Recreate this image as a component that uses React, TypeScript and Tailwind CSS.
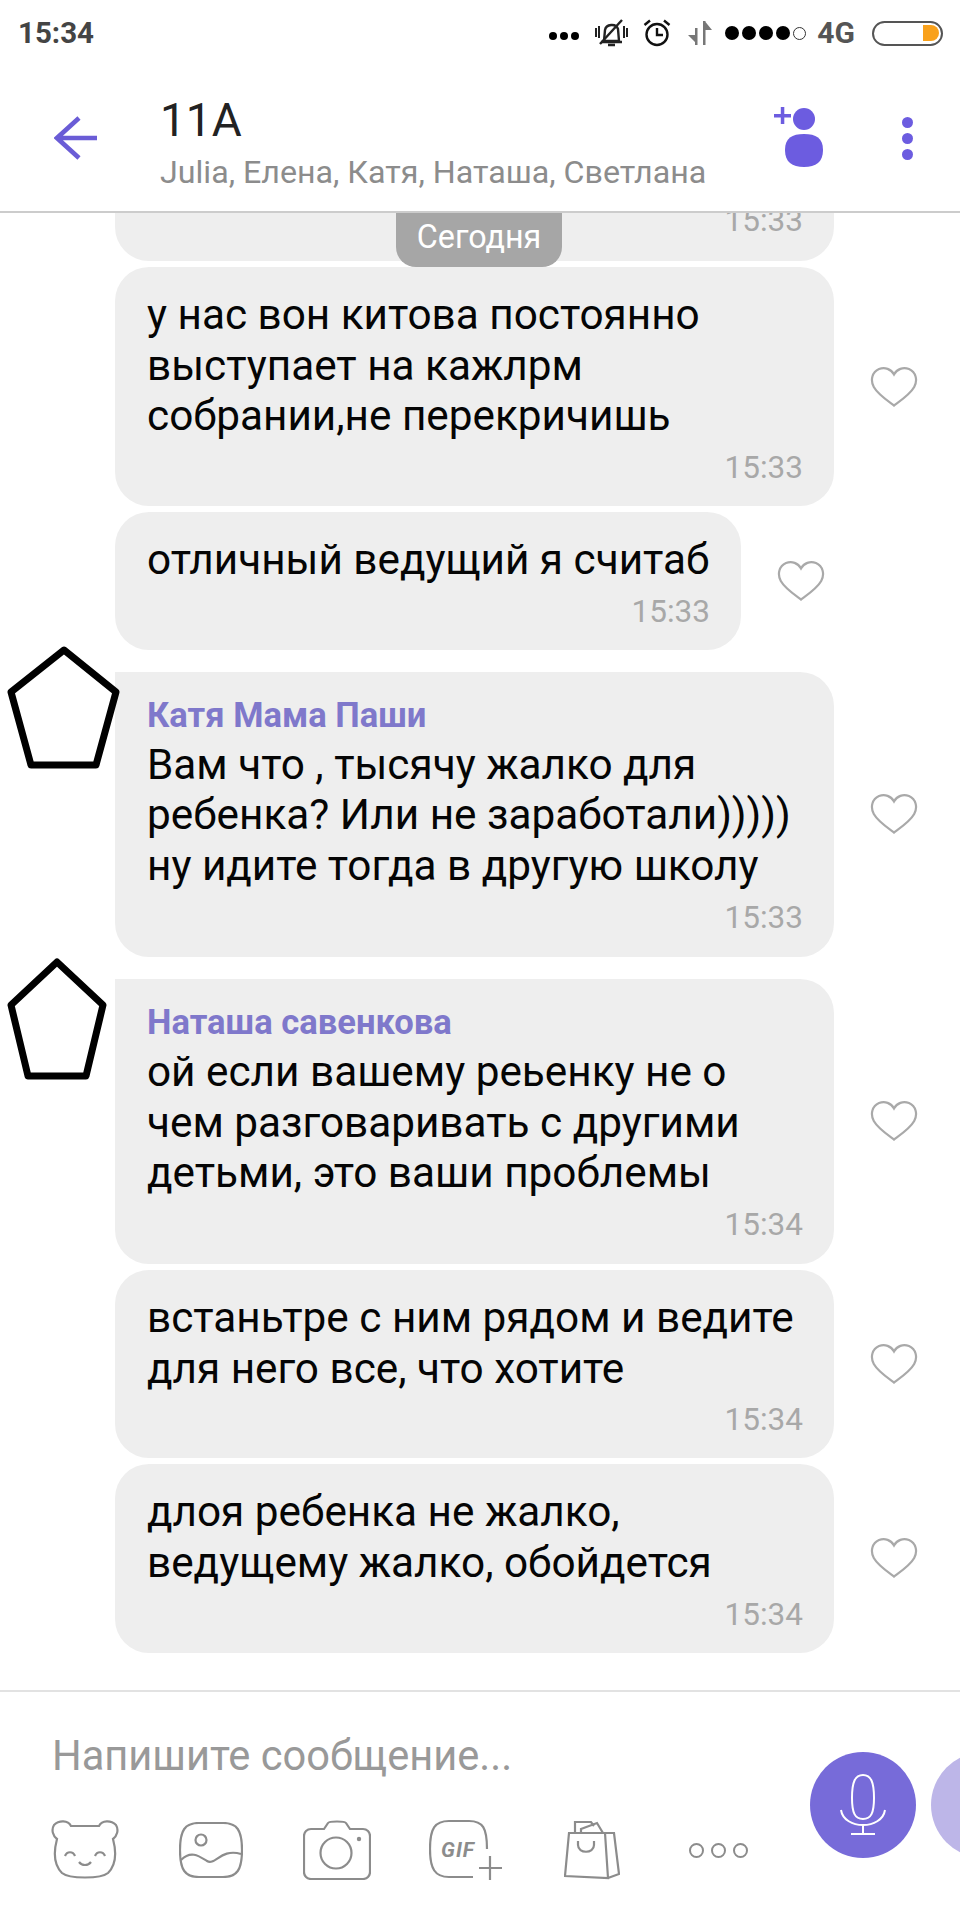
import React from "react";

const Heart = () => (
  <svg width="48" height="42" viewBox="0 0 48 42" fill="none" stroke="#a9a9a9" strokeWidth="2.2">
    <path d="M24 39.5 C18 35 8 28.5 3.8 21 C0 14 2.2 6 9 3 C15 .8 21 3 24 8.5 C27 3 33 .8 39 3 C45.8 6 48 14 44.2 21 C40 28.5 30 35 24 39.5 Z" />
  </svg>
);

const Pentagon = ({ d }: { d: string }) => (
  <svg width="120" height="124" viewBox="0 0 120 124" fill="none" stroke="#000" strokeWidth="7" strokeLinejoin="round">
    <path d={d} />
  </svg>
);

function Bubble({ lines, time, name, w, avatar, avatarTop, mt }: { lines: string[]; time: string; name?: string; w: string; avatar?: string; avatarTop?: string; mt: string }) {
  return (
    <div className={`relative flex items-center pl-[115px] ${mt}`}>
      {avatar && (
        <div className={`absolute left-0 ${avatarTop}`}>
          <Pentagon d={avatar} />
        </div>
      )}
      <div className={`${w} rounded-[34px] bg-[#eeeeee] pl-[32px] pr-[31px] ${name ? "pt-[20px] pb-[20px]" : "pt-[23px] pb-[19px]"} ${avatar ? "rounded-tl-none" : ""}`}>
        {name && <div className="h-[48px] text-[34.6px] leading-[46px] font-bold text-[#7f78cb]">{name}</div>}
        {lines.map((l) => (
          <div key={l} className="h-[50.7px] whitespace-nowrap text-[42.3px] leading-[50.7px] text-[#050505]">
            {l}
          </div>
        ))}
        <div className="mt-[7px] h-[38px] text-right text-[31.5px] leading-[38px] text-[#a8a8a8]">{time}</div>
      </div>
      <div className="ml-[36px]">
        <Heart />
      </div>
    </div>
  );
}

const G = "#8c8c8c";

export default function App() {
  return (
    <div className="flex h-[1920px] w-[960px] flex-col overflow-hidden bg-white font-['Roboto',sans-serif]">
      {/* status bar */}
      <div className="flex h-[66px] shrink-0 items-center justify-between pl-[18px] pr-[17px]">
        <span className="text-[29.5px] font-bold text-[#444444]">15:34</span>
        <div className="flex items-center">
          <div className="mt-[6px] flex gap-[3px]">
            <span className="h-[8px] w-[8px] rounded-full bg-black" />
            <span className="h-[8px] w-[8px] rounded-full bg-black" />
            <span className="h-[8px] w-[8px] rounded-full bg-black" />
          </div>
          <svg className="ml-[15px]" width="34" height="30" viewBox="0 0 34 30" fill="none" stroke="#222" strokeWidth="2.4">
            <path d="M10 23 L11 12 C12 6 22 5 24 11 L25 23 Z M7 24 H28 M14 27 H21" />
            <path d="M6 26 L28 2" />
            <path d="M2 10 V19 M5 8 V20 M30 8 V20 M33 10 V19" strokeWidth="2" />
          </svg>
          <svg className="ml-[15px]" width="28" height="28" viewBox="0 0 28 28" fill="none" stroke="#111" strokeWidth="2.4">
            <circle cx="14" cy="15.5" r="10.5" />
            <path d="M14 9 V16 H20 M1.5 6 L7 1.5 M26.5 6 L21 1.5" />
          </svg>
          <svg className="ml-[16px]" width="26" height="26" viewBox="0 0 26 26" fill="#777">
            <path d="M8 25 V8 H10.5 V25 Z M1 15 H8 V22 Z" />
            <path d="M16 1 H18.5 V25 H16 Z M18.5 2 L25 10 H18.5 Z" />
          </svg>
          <div className="ml-[12px] flex items-center gap-[3px]">
            <span className="h-[14px] w-[14px] rounded-full bg-black" />
            <span className="h-[14px] w-[14px] rounded-full bg-black" />
            <span className="h-[14px] w-[14px] rounded-full bg-black" />
            <span className="h-[14px] w-[14px] rounded-full bg-black" />
            <span className="h-[13px] w-[13px] rounded-full border-[1.5px] border-[#333]" />
          </div>
          <span className="ml-[11px] text-[30px] font-bold leading-none text-[#555555]">4G</span>
          <div className="ml-[17px] flex h-[25px] w-[71px] items-center justify-end rounded-full border-[2.5px] border-[#555] pr-[2px]">
            <span className="h-[16px] w-[16px] rounded-r-full bg-[#f9a11b]" />
          </div>
        </div>
      </div>

      {/* header */}
      <div className="flex h-[147px] shrink-0 items-center border-b-2 border-[#cccccc]">
        <svg className="ml-[54px] mt-[-1px] shrink-0" width="44" height="44" viewBox="0 0 44 44" fill="none" stroke="#6a5cd6" strokeWidth="4.6">
          <path d="M43 22 H3 M25 2 L3 22 L25 42" />
        </svg>
        <div className="ml-[62px] mt-[5px] flex flex-1 flex-col">
          <span className="text-[46px] leading-[54px] text-[#222222]">11A</span>
          <span className="mt-[7px] text-[32.2px] leading-[36px] text-[#8c8c8c]">Julia, Елена, Катя, Наташа, Светлана</span>
        </div>
        <svg className="mr-[78px] mt-[-4px] shrink-0" width="50" height="60" viewBox="0 0 50 60" fill="#6c5ce0">
          <path d="M0 7 H17 V10.5 H0 Z M6.8 0 H10.3 V17 H6.8 Z" />
          <circle cx="30" cy="12" r="11" />
          <path d="M30 27 C42 27 49 31 49 43 C49 55 42 60 30 60 C18 60 11 55 11 43 C11 31 18 27 30 27 Z" />
        </svg>
        <div className="mr-[47px] mt-[-1px] flex shrink-0 flex-col gap-[5px]">
          <span className="h-[11px] w-[11px] rounded-full bg-[#6c5ce0]" />
          <span className="h-[11px] w-[11px] rounded-full bg-[#6c5ce0]" />
          <span className="h-[11px] w-[11px] rounded-full bg-[#6c5ce0]" />
        </div>
      </div>

      {/* messages */}
      <div className="relative h-[1479px] shrink-0 overflow-hidden border-b-2 border-[#e2e2e2]">
        <div className="absolute left-[396px] top-0 z-10 flex h-[54px] w-[166px] items-center justify-center rounded-b-[20px] bg-[#a6a6a6] pb-[6px] text-[32.3px] text-white">
          Сегодня
        </div>
        <div className="ml-[115px] flex h-[48px] w-[719px] items-start justify-end rounded-b-[34px] bg-[#eeeeee] pr-[31px]">
          <span className="mt-[-11px] text-[31.5px] leading-[38px] text-[#a8a8a8]">15:33</span>
        </div>
        <Bubble mt="mt-[6px]" w="w-[719px]" lines={["у нас вон китова постоянно", "выступает на кажлрм", "собрании,не перекричишь"]} time="15:33" />
        <Bubble mt="mt-[6px]" w="w-[626px]" lines={["отличный ведущий я считаб"]} time="15:33" />
        <Bubble mt="mt-[22px]" w="w-[719px]" avatar="M64 4 L116 46 L96 119 L31 119 L11 46 Z" avatarTop="top-[-26px]" name="Катя Мама Паши" lines={["Вам что , тысячу жалко для", "ребенка? Или не заработали)))))", "ну идите тогда в другую школу"]} time="15:33" />
        <Bubble mt="mt-[22px]" w="w-[719px]" avatar="M57 4 L103 47 L86 118 L28 118 L11 47 Z" avatarTop="top-[-21px]" name="Наташа савенкова" lines={["ой если вашему реьенку не о", "чем разговаривать с другими", "детьми, это ваши проблемы"]} time="15:34" />
        <Bubble mt="mt-[6px]" w="w-[719px]" lines={["встаньтре с ним рядом и ведите", "для него все, что хотите"]} time="15:34" />
        <Bubble mt="mt-[6px]" w="w-[719px]" lines={["длоя ребенка не жалко,", "ведущему жалко, обойдется"]} time="15:34" />
      </div>

      {/* composer */}
      <div className="flex flex-1">
        <div className="w-[810px] shrink-0">
          <div className="pl-[52px] pt-[39px] text-[41.6px] leading-[50px] text-[#999999]">Напишите сообщение...</div>
          <div className="mt-[38px] flex items-center pl-[22px]">
            <div className="flex w-[126px] justify-center">
              <svg width="68" height="60" viewBox="0 0 68 60" fill="none" stroke={G} strokeWidth="2.2">
                <path d="M20 6 H48 C51 0 60 0 65 5 C68 10 66 16 62 19 C66 34 65 45 57 53 C50 59 18 59 11 53 C3 45 2 34 6 19 C2 16 0 10 3 5 C8 0 17 0 20 6 Z" />
                <path d="M14 36 C16 31 22 31 24 36 M44 36 C46 31 52 31 54 36 M28 42 C31 46 37 46 40 42" />
              </svg>
            </div>
            <div className="flex w-[126px] justify-center">
              <svg width="64" height="56" viewBox="0 0 64 56" fill="none" stroke={G} strokeWidth="2.2">
                <path d="M20 1 H44 C58 1 63 8 63 28 C63 48 58 55 44 55 H20 C6 55 1 48 1 28 C1 8 6 1 20 1 Z" />
                <circle cx="22" cy="18" r="5.5" />
                <path d="M2 38 C12 28 20 34 28 39 C36 44 42 26 62 32" />
              </svg>
            </div>
            <div className="flex w-[126px] justify-center">
              <svg width="68" height="60" viewBox="0 0 68 60" fill="none" stroke={G} strokeWidth="2.2">
                <path d="M8 9 H21 L25 3 C26 1 42 1 43 3 L47 9 H60 C64 9 67 12 67 16 V52 C67 56 64 59 60 59 H8 C4 59 1 56 1 52 V16 C1 12 4 9 8 9 Z" />
                <circle cx="33" cy="33" r="15.5" />
                <circle cx="56" cy="19" r="2.2" fill={G} stroke="none" />
              </svg>
            </div>
            <div className="flex w-[132px] justify-center">
              <svg width="74" height="62" viewBox="0 0 74 62" fill="none" stroke={G} strokeWidth="2.2">
                <path d="M44 58 H20 C6 58 1 50 1 30 C1 9 6 2 20 2 H40 C54 2 58 9 58 30" />
                <text x="12" y="38" fill={G} stroke="none" fontFamily="Roboto, sans-serif" fontSize="21" fontWeight="700" fontStyle="italic" letterSpacing="1">GIF</text>
                <path d="M61 37 V61 M50 49 H73" />
              </svg>
            </div>
            <div className="flex w-[120px] justify-center">
              <svg width="56" height="60" viewBox="0 0 56 60" fill="none" stroke={G} strokeWidth="2.2">
                <path d="M5 13 H41 L44 58 L1 56 Z M41 13 H50 L55 54 L44 58" />
                <path d="M11 13 V2 H27 L30 6 M17 13 L17 9 L33 3 L39 13" />
                <path d="M14 21 V25 C14 34 30 34 30 25 V21" />
              </svg>
            </div>
            <div className="ml-[37px] flex gap-[7px]">
              <span className="h-[15px] w-[15px] rounded-full border-[2.5px] border-[#8c8c8c]" />
              <span className="h-[15px] w-[15px] rounded-full border-[2.5px] border-[#8c8c8c]" />
              <span className="h-[15px] w-[15px] rounded-full border-[2.5px] border-[#8c8c8c]" />
            </div>
          </div>
        </div>
        <div className="mt-[60px] flex shrink-0 gap-[15px]">
          <div className="flex h-[106px] w-[106px] items-center justify-center rounded-full bg-[#776bd9]">
            <svg width="46" height="62" viewBox="0 0 46 62" fill="none" stroke="#fff" strokeWidth="2">
              <path d="M23 1 C31 1 34 8 34 24 C34 39 31 45 23 45 C15 45 12 39 12 24 C12 8 15 1 23 1 Z" />
              <path d="M1 36 C4 56 42 56 45 36 M23 50 V60 M11 60 H35" />
            </svg>
          </div>
          <div className="h-[106px] w-[106px] rounded-full bg-[#bdb6e8]" />
        </div>
      </div>
    </div>
  );
}
